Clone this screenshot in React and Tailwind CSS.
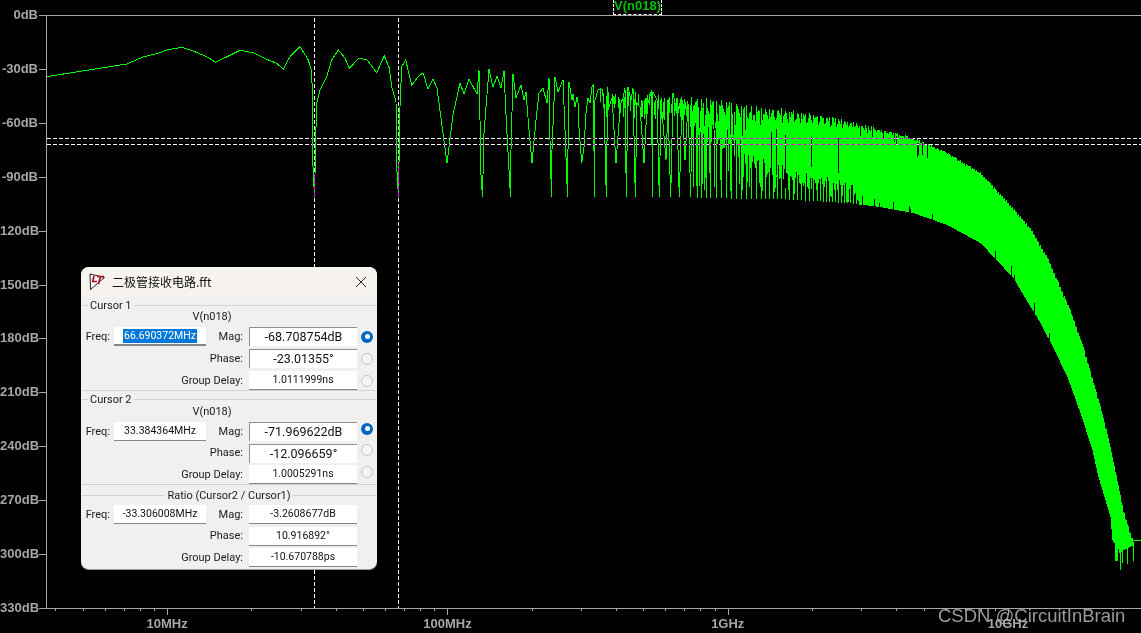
const GREEN = "#00ff00";

const lerpTable = (pts, x) => {
  if (x <= pts[0][0]) return pts[0][1];
  for (let i = 1; i < pts.length; i++) {
    if (x <= pts[i][0]) {
      const [a, b] = pts[i - 1];
      const [c, d] = pts[i];
      return b + ((d - b) * (x - a)) / (c - a);
    }
  }
  return pts[pts.length - 1][1];
};

const trace = [
  [46.5, 76.7], [126.7, 64], [143, 57], [160, 52.7], [166.7, 50], [181.7, 47.3], [193, 51], [206.7, 56.7], [215.7, 62.3],
  [240, 50.3], [253, 52.7], [266.7, 59.3], [276.7, 63.3], [283.3, 69], [290, 56.7], [300, 46.7], [308.3, 60], [311.7, 71.7],
  [312.7, 106.7], [313, 167], [314.5, 197], [316, 128], [316.7, 103], [320, 90], [326.7, 76.7], [331.7, 60], [338.3, 50],
  [345, 58], [349.3, 68.3], [358.3, 58.7], [366.7, 59.3], [376.7, 72.7], [384.3, 55.7], [389.3, 68.3], [391.7, 86.7],
  [396, 101.7], [396.7, 167], [398.5, 197], [399.5, 130], [400, 106.7], [401.7, 66.7], [405.7, 60], [411.7, 85], [418.3, 76.7],
  [420, 75], [423, 73], [428, 89], [433, 79], [437, 88], [447, 163], [453, 115], [460, 83], [464, 94], [469, 79], [477, 94], [479, 70],
  [480, 120], [481, 175], [482.5, 197], [483, 175], [484, 133], [489, 69], [493, 87], [497, 76], [501, 88], [504, 71], [506, 115], [509, 170], [510.5, 197],
  [511, 150], [513, 74], [516, 98], [521, 85], [524, 100], [526, 92], [529, 130], [532, 163], [536, 120], [539, 93], [543, 88], [547, 103], [549, 78],
  [550, 140], [551.5, 197], [552, 150], [555, 77], [558, 92], [563, 80], [565, 130], [567.5, 197], [568, 150], [569, 82], [572, 100], [573, 94], [575, 107], [577, 97], [578, 103],
  [579, 128], [581.7, 163], [584, 147], [586, 113], [588, 98], [590, 103], [592, 87], [593.3, 84], [594.5, 197], [595, 100], [598, 90], [602, 89], [604, 103],
  [606.3, 197], [607.7, 87], [609, 107], [612, 98], [613, 113], [616, 163], [619, 123], [621, 103], [623, 98], [625, 88], [626.3, 197], [628, 87], [631, 100], [633, 88],
  [635.3, 197], [637, 103], [640, 107], [644, 163], [647, 107], [651.7, 90], [652.3, 197], [653, 92], [657, 100], [659.3, 197], [661, 100], [666, 160], [668, 107],
  [670.7, 197], [673, 93], [677, 113], [679.3, 197], [682, 100], [685, 160], [688, 103], [690.7, 197], [692, 97],
];
const tracePath = "M" + trace.map((p) => p.join(" ")).join("L");

const topEnv = [[594, 84], [627, 87], [652, 90], [673, 93], [692, 96], [722, 99], [745, 104], [763, 106], [780, 108], [813, 113], [847, 120], [880, 128], [913, 137], [947, 152], [980, 172], [1013, 208], [1030, 228], [1047, 257], [1057, 280], [1070, 310], [1083, 347], [1097, 395], [1107, 433], [1117, 480], [1123, 510], [1130, 533], [1133, 540]];
const lowEnv = [[594, 197], [780, 199], [847, 203], [880, 207], [913, 213], [947, 225], [980, 243], [1013, 278], [1020, 290], [1040, 323], [1053, 348], [1067, 377], [1080, 413], [1092, 450], [1098, 477], [1110, 517], [1112, 540], [1120, 552], [1133, 545]];
const bodyH = [[594, 30], [692, 42], [720, 50], [760, 68], [800, 76], [860, 85], [1141, 85]];
const toothAmp = [[594, 14], [720, 14], [800, 11], [860, 6], [930, 2], [1000, 0], [1141, 0]];
const toothPeriod = [[594, 13], [720, 8], [800, 6], [1000, 5], [1141, 5]];
const deepList = [697, 701, 706, 710, 716, 721];

const buildComb = () => {
  let seed = 12345;
  const rnd = () => {
    seed = (seed * 1664525 + 1013904223) % 4294967296;
    return seed / 4294967296;
  };
  let green = "";
  let dark = "";
  let phase = 0;
  let nextDeep = 726;
  for (let x = 600; x < 692; x++) {
    if (rnd() < 0.55) {
      const t = lerpTable(topEnv, x);
      const a = t + 3 + rnd() * 10;
      green += `M${x + 0.5} ${a.toFixed(1)}V${(a + 6 + rnd() * 16).toFixed(1)}`;
    }
  }
  for (let x = 692; x <= 1133; x++) {
    const t = lerpTable(topEnv, x);
    const d = lerpTable(lowEnv, x);
    const amp = lerpTable(toothAmp, x);
    phase += 1 / lerpTable(toothPeriod, x);
    const p = phase % 1;
    const tri = Math.abs(2 * p - 1);
    let y0 = t + amp * tri + rnd() * amp * 0.3;
    const solid = x > 740 ? 0.75 + 0.25 * rnd() : 0.55 + 0.45 * rnd();
    let y1 = t + lerpTable(bodyH, x) * solid;
    let deep = deepList.includes(x);
    if (x >= 726 && x >= nextDeep) {
      deep = true;
      nextDeep = x + Math.max(2, 4.6 - (x - 726) * 0.018);
    }
    if (deep) {
      y1 = d + (x > 1110 ? rnd() * 18 : 0);
      y0 = t + rnd() * 3;
    } else if (x < 860 && rnd() < 0.4) {
      y1 = t + (d - t) * (0.72 + 0.24 * rnd());
    } else if (x >= 860) {
      y1 = d;
    }
    if (x > 1110) y1 = d + (rnd() < 0.45 ? rnd() * 20 : 0);
    if (x < 770 && !deep && rnd() < 0.22) {
      y0 = t + 14 + rnd() * 20;
      if (y1 < y0 + 6) y1 = y0 + 6;
    }
    green += `M${x + 0.5} ${y0.toFixed(1)}V${y1.toFixed(1)}`;
    if (x > 770 && x < 860 && rnd() < 0.11) {
      const a = t + 18 + rnd() * 10;
      dark += `M${x + 0.5} ${a.toFixed(1)}V${(a + 30 + rnd() * 25).toFixed(1)}`;
    } else if (x >= 860 && x < 935 && rnd() < 0.12) {
      const a = t + 1 + rnd() * 3;
      dark += `M${x + 0.5} ${a.toFixed(1)}V${(a + 6 + rnd() * 10).toFixed(1)}`;
    } else if (x >= 860 && x < 1050 && rnd() < 0.08) {
      dark += `M${x + 0.5} ${(d - 3 - rnd() * 7).toFixed(1)}V${d + 1}`;
    }
  }
  green += "M1133 540L1141 541";
  return { green, dark };
};
const comb = buildComb();

const yTicks = Array.from({ length: 12 }, (_, i) => 15 + (593 * i) / 11);
const yLabels = ["0dB", "-30dB", "-60dB", "-90dB", "120dB", "150dB", "180dB", "210dB", "240dB", "270dB", "300dB", "330dB"];
const decades = [167, 447.3, 727.6, 1008];
const minorTicks = [];
[-280.3, 0, 280.3, 560.6, 841].forEach((off) => {
  [2, 3, 4, 5, 6, 7, 8, 9].forEach((m) => {
    const x = 167 + off - 280.3 + 280.3 * Math.log10(m);
    if (x > 47 && x < 1141) minorTicks.push(Math.round(x));
  });
});

function Chart() {
  return (
    <svg viewBox="39 0 1102 618" width="1102" height="618" className="block shrink-0" shapeRendering="crispEdges">
      <path d={tracePath} fill="none" stroke={GREEN} strokeWidth="1" />
      <path d={comb.green} fill="none" stroke={GREEN} strokeWidth="1" />
      <path d={comb.dark} fill="none" stroke="#000" strokeWidth="1" />
      <g stroke="#a8a8a8" strokeWidth="1" fill="none">
        <path d="M46.5 15.5H1141M46.5 15V608.5H1141" />
        {yTicks.map((y) => (
          <path key={y} d={`M39 ${Math.round(y) + 0.5}H46`} />
        ))}
        {minorTicks.map((x) => (
          <path key={x} d={`M${x + 0.5} 608V611`} />
        ))}
        {decades.map((x) => (
          <path key={x} d={`M${Math.round(x) + 0.5} 608V615`} />
        ))}
      </g>
      <g stroke="#fff" strokeWidth="1" strokeDasharray="4 2" fill="none" className="mix-blend-difference">
        <path d="M314.5 18V608" />
        <path d="M398.5 18V608" />
        <path d="M47 138.5H1141" />
        <path d="M47 144.5H1141" />
      </g>
    </svg>
  );
}

function Field({ children, sunken, large, selected }) {
  const border = sunken
    ? "border-t border-l border-t-[#8f8f8f] border-l-[#8f8f8f]"
    : "border-b border-b-[#858585]";
  return (
    <div className={`h-[19px] bg-white flex items-center justify-center text-[#111] ${border} ${large ? "text-[12.5px] pt-px" : "text-[10.5px]"} ${selected ? "border-b-2 border-b-[#0067c0]" : ""}`}>
      {children}
    </div>
  );
}

function Radio({ on, lifted }) {
  const place = lifted ? "mb-[6px]" : "";
  if (on) {
    return (
      <div className={`w-3 h-3 rounded-full bg-[#0067c0] flex items-center justify-center ${place}`}>
        <div className="w-[5px] h-[5px] rounded-full bg-white" />
      </div>
    );
  }
  return <div className={`w-3 h-3 rounded-full border border-[#c4c4c4] bg-[#f4f4f4] ${place}`} />;
}

function Row({ freq, label, value, large, sunken, radio, selected, lifted }) {
  return (
    <div className="grid grid-cols-[29px_92px_35px_108px_12px] gap-x-1 items-center h-[19px]">
      {freq ? (
        <>
          <div className="text-right whitespace-nowrap pt-px">Freq:</div>
          {selected ? (
            <Field selected>
              <span className="bg-[#0078d7] text-white leading-[14px] px-px">{freq}</span>
            </Field>
          ) : (
            <Field>{freq}</Field>
          )}
          <div className="text-right pr-[2px] whitespace-nowrap pt-px">{label}</div>
        </>
      ) : (
        <div className="col-span-3 text-right pr-[2px] whitespace-nowrap pt-px">{label}</div>
      )}
      <Field large={large} sunken={sunken}>{value}</Field>
      {radio === undefined ? <div /> : <Radio on={radio} lifted={lifted} />}
    </div>
  );
}

function Heading({ children, center }) {
  return (
    <div className="flex items-center h-4 text-[#1a1a1a]">
      <div className={`h-px bg-[#d2d2d2] ${center ? "flex-1" : "w-[7px]"}`} />
      <span className="px-[2px] whitespace-nowrap leading-4 pt-px">{children}</span>
      <div className="h-px bg-[#d2d2d2] flex-1" />
    </div>
  );
}

function CursorSection({ title, freq, mag, phase, delay, selected, tight }) {
  return (
    <div className="border-b border-b-[#d2d2d2]">
      <Heading>{title}</Heading>
      <div className={`text-center pr-[34px] leading-[14px] ${tight ? "-mt-[2px] mb-[3px]" : "-mt-[3px] mb-[3px]"}`}>V(n018)</div>
      <div className={`flex flex-col ${tight ? "gap-y-[2.5px]" : "gap-y-[3px]"}`}>
        <Row freq={freq} label="Mag:" value={mag} large sunken radio={true} selected={selected} lifted={tight} />
        <Row label="Phase:" value={phase} large sunken radio={false} lifted={tight} />
        <Row label="Group Delay:" value={delay} radio={false} lifted={tight} />
      </div>
    </div>
  );
}

function Dialog() {
  return (
    <div className="absolute left-[81px] top-[267px] w-[296px] h-[303px] rounded-lg overflow-hidden bg-[#f0f0f0] text-[11px] text-[#1a1a1a] border-b border-b-[#9a9a9a] font-['Roboto','Noto_Sans_CJK_SC',sans-serif]">
      <div className="h-[30px] bg-[#f7f3ef] flex items-center pl-[8px] pr-[8px]">
        <svg width="17" height="18" viewBox="0 0 17 18" className="shrink-0">
          <path d="M1 1L1.5 16.5L15.5 4.5Z" fill="#fbf8f5" stroke="#222" strokeWidth="1" />
          <path d="M5 3L3.8 8.5H8M8 3.5H15M11.5 3.5L9.5 11" fill="none" stroke="#a8121c" strokeWidth="1.7" />
        </svg>
        <span className="ml-[6px] text-[12px] text-[#111] whitespace-nowrap font-['Noto_Sans_CJK_SC',sans-serif]">二极管接收电路.fft</span>
        <svg width="12" height="12" viewBox="0 0 12 12" className="ml-auto mr-[2px]">
          <path d="M1 1L11 11M11 1L1 11" stroke="#222" strokeWidth="1" fill="none" />
        </svg>
      </div>
      <CursorSection title="Cursor 1" freq="66.690372MHz" mag="-68.708754dB" phase="-23.01355°" delay="1.0111999ns" selected />
      <CursorSection title="Cursor 2" freq="33.384364MHz" mag="-71.969622dB" phase="-12.096659°" delay="1.0005291ns" tight />
      <div className="pt-[2px] flex flex-col">
        <Heading center>Ratio (Cursor2 / Cursor1)</Heading>
        <div className="flex flex-col gap-y-[2.5px] pt-[2px]">
          <Row freq="-33.306008MHz" label="Mag:" value="-3.2608677dB" />
          <Row label="Phase:" value="10.916892°" />
          <Row label="Group Delay:" value="-10.670788ps" />
        </div>
      </div>
    </div>
  );
}

export default function App() {
  return (
    <div className="relative w-[1141px] h-[633px] bg-black overflow-hidden font-['Liberation_Sans',sans-serif]">
      <div className="flex">
        <div className="w-[39px] h-[615px] pt-2 flex flex-col justify-between text-right text-[13px] font-bold text-[#a6a6a6]">
          {yLabels.map((l) => (
            <div key={l} className="h-[14px] leading-[14px] pr-px whitespace-nowrap">{l}</div>
          ))}
        </div>
        <Chart />
      </div>
      <div className="flex pl-[27px] text-[13px] font-bold text-[#a6a6a6] -mt-px">
        {["10MHz", "100MHz", "1GHz", "10GHz"].map((l) => (
          <div key={l} className="w-[280.3px] shrink-0 text-center leading-[14px]">{l}</div>
        ))}
      </div>
      <div className="absolute left-[613px] top-0 w-[49px] h-[15px] pb-[3px] border-l border-r border-b border-dashed border-white flex items-center justify-center text-[13px] font-bold text-[#00c000] leading-none">
        V(n018)
      </div>
      <Dialog />
      <div className="absolute left-[938px] top-[605px] text-[18.5px] leading-[22px] text-[#b4b4b4]/85 whitespace-nowrap">CSDN @CircuitInBrain</div>
    </div>
  );
}
